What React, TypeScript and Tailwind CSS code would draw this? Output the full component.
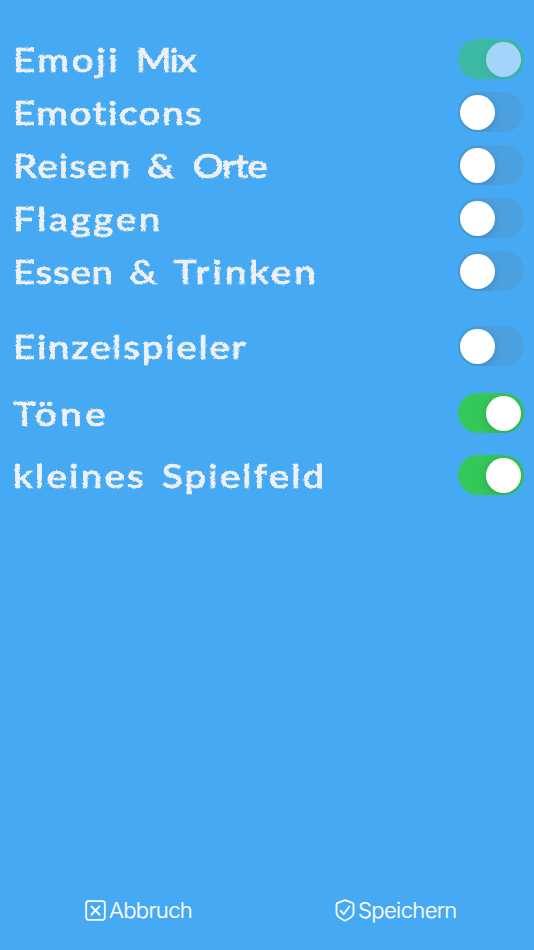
import { Fragment, useState } from "react";
import clsx from "clsx";

type Word = { text: string; spacing: string };

type Setting = {
  id: string;
  words: Word[];
  on: boolean;
  locked?: boolean;
  row: string;
};

const SETTINGS: Setting[] = [
  {
    id: "mix",
    words: [
      { text: "Emoji", spacing: "tracking-[2.2px]" },
      { text: "Mix", spacing: "tracking-[-1.5px]" },
    ],
    on: true,
    locked: true,
    row: "",
  },
  { id: "emoticons", words: [{ text: "Emoticons", spacing: "tracking-[1.3px]" }], on: false, row: "mt-[13px]" },
  {
    id: "places",
    words: [
      { text: "Reisen", spacing: "tracking-[1px]" },
      { text: "&", spacing: "tracking-[2px]" },
      { text: "Orte", spacing: "tracking-[-1px]" },
    ],
    on: false,
    row: "mt-[13px]",
  },
  { id: "flags", words: [{ text: "Flaggen", spacing: "tracking-[2.2px]" }], on: false, row: "mt-[13px]" },
  {
    id: "food",
    words: [
      { text: "Essen", spacing: "tracking-[0.6px]" },
      { text: "&", spacing: "tracking-[1px]" },
      { text: "Trinken", spacing: "tracking-[2.5px]" },
    ],
    on: false,
    row: "mt-[13px]",
  },
  { id: "single", words: [{ text: "Einzelspieler", spacing: "tracking-[1.5px]" }], on: false, row: "mt-[35px]" },
  { id: "sounds", words: [{ text: "Töne", spacing: "tracking-[2.9px]" }], on: true, row: "mt-[27px]" },
  {
    id: "small",
    words: [
      { text: "kleines", spacing: "tracking-[1.9px]" },
      { text: "Spielfeld", spacing: "tracking-[1.8px]" },
    ],
    on: true,
    row: "mt-[22px]",
  },
];

function Toggle({ on, locked, label, onChange }: { on: boolean; locked?: boolean; label: string; onChange: () => void }) {
  return (
    <button
      type="button"
      role="switch"
      aria-checked={on}
      aria-label={label}
      disabled={locked}
      onClick={onChange}
      className={clsx(
        "flex h-10 w-[66px] shrink-0 items-center overflow-hidden rounded-full pr-[3px] pl-[2px]",
        on ? "justify-end" : "justify-start",
        locked ? "bg-[#3dbaa4]" : on ? "bg-[#34c759]" : "bg-[#4ba1df]"
      )}
    >
      <span
        className={clsx(
          "size-[35px] rounded-full",
          locked ? "bg-[#a3d5fa] shadow-[0_2px_8px_rgba(0,0,0,0.08)]" : "bg-white shadow-[0_2px_8px_rgba(0,0,0,0.16)]"
        )}
      />
    </button>
  );
}

export default function App() {
  const [values, setValues] = useState<Record<string, boolean>>(
    Object.fromEntries(SETTINGS.map((s) => [s.id, s.on]))
  );

  return (
    <div className="flex h-[950px] w-full flex-col bg-[#46a9f3]">
      {/* rough edges for the chalk lettering */}
      <svg className="absolute size-0" aria-hidden="true">
        <filter id="chalk" x="-2%" y="-10%" width="104%" height="120%">
          <feTurbulence type="fractalNoise" baseFrequency="0.4" numOctaves="2" seed="4" result="noise" />
          <feDisplacementMap in="SourceGraphic" in2="noise" scale="2.5" xChannelSelector="R" yChannelSelector="G" />
        </filter>
      </svg>

      <main className="flex flex-1 flex-col pt-[39px] pr-[10px] pl-[13px]">
        {SETTINGS.map((s) => (
          <div key={s.id} className={clsx("flex h-10 items-center justify-between", s.row)}>
            <span className="origin-left scale-x-120 pt-[2px] font-['Chalkduster','Lato',sans-serif] text-[32px] leading-[44px] font-medium [word-spacing:5px] whitespace-pre text-[#eef1f3] [-webkit-text-stroke:0.7px_#eef1f3] [filter:url(#chalk)] [font-variant-ligatures:none]">
              {s.words.map((w, i) => (
                <Fragment key={w.text}>
                  {i > 0 && " "}
                  <span className={w.spacing}>{w.text}</span>
                </Fragment>
              ))}
            </span>
            <Toggle
              on={values[s.id]}
              locked={s.locked}
              label={s.words.map((w) => w.text).join(" ")}
              onChange={() => setValues((v) => ({ ...v, [s.id]: !v[s.id] }))}
            />
          </div>
        ))}
      </main>

      <footer className="flex h-20 items-center font-['Inter',sans-serif] text-[22px] font-light tracking-[-0.6px] text-white [-webkit-text-stroke:0.2px_white]">
        <button type="button" className="flex flex-1 items-center pl-[85px]">
          <svg className="mr-[3px] size-[21px]" viewBox="0 0 21 21" fill="none" stroke="currentColor" strokeWidth="1.8" strokeLinecap="round">
            <rect x="1.2" y="1.2" width="18.6" height="18.6" rx="2.2" />
            <path d="M6.5 6.5l8 8M14.5 6.5l-8 8" />
          </svg>
          Abbruch
        </button>
        <button type="button" className="flex w-[199px] items-center">
          <svg className="mr-[3px] h-[23px] w-[20px]" viewBox="0 0 20 23" fill="none" stroke="currentColor" strokeWidth="1.8" strokeLinecap="round" strokeLinejoin="round">
            <path d="M10 1.2L2.1 4.2Q1.5 4.5 1.5 5.2V14.2C1.5 17.2 5.5 19.6 10 21.8C14.5 19.6 18.5 17.2 18.5 14.2V5.2Q18.5 4.5 17.9 4.2Z" />
            <path d="M5.8 11.8L8.7 15.2L14.3 7.5" />
          </svg>
          Speichern
        </button>
      </footer>
    </div>
  );
}
